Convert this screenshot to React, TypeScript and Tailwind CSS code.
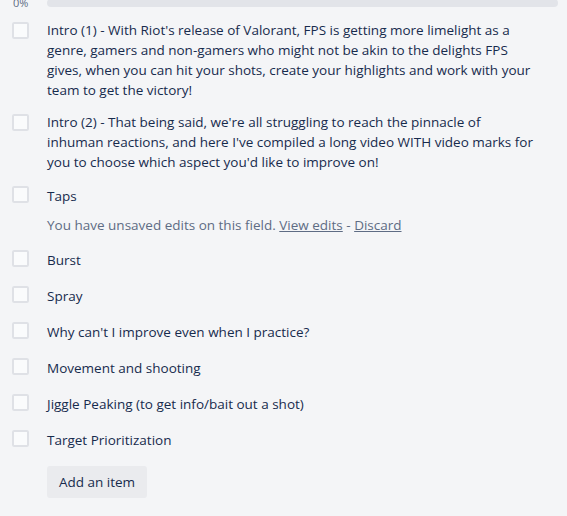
import React from 'react';

const items = [
    { id: 1, text: "Intro (1) - With Riot's release of Valorant, FPS is getting more limelight as a genre, gamers and non-gamers who might not be akin to the delights FPS gives, when you can hit your shots, create your highlights and work with your team to get the victory!" },
    { id: 2, text: "Intro (2) - That being said, we're all struggling to reach the pinnacle of inhuman reactions, and here I've compiled a long video WITH video marks for you to choose which aspect you'd like to improve on!" },
    { id: 3, text: 'Taps', unsaved: true },
    { id: 4, text: 'Burst' },
    { id: 5, text: 'Spray' },
    { id: 6, text: "Why can't I improve even when I practice?" },
    { id: 7, text: 'Movement and shooting' },
    { id: 8, text: 'Jiggle Peaking (to get info/bait out a shot)' },
    { id: 9, text: 'Target Prioritization' },
];

const Checkbox = () => (
    <div className="w-[17px] h-[17px] rounded-[2px] bg-[#fafbfc] shadow-[inset_0_0_0_2px_#dfe1e6]" />
);

export default function App() {
    return (
        <div
            className="min-h-[516px] w-[567px] overflow-hidden bg-[#f4f5f7] text-[#172b4d] text-[13.5px] leading-5"
            style={{ fontFamily: '"Open Sans", "Noto Sans", sans-serif' }}
        >
            {/* progress */}
            <div className="flex items-start h-[14px] pr-[9px]">
                <div className="w-[47px] shrink-0 pl-[13px] -mt-[3px] text-[11px] leading-[12px] text-[#5e6c84]">0%</div>
                <div className="flex-1 -mt-[1px] h-[8px] rounded-[4px] bg-[#e2e4e9]" />
            </div>

            {/* items */}
            <div className="pr-[30px]">
                {items.map((item) => (
                    <div key={item.id} className="flex">
                        <div className="w-[47px] shrink-0 pl-[12px] pt-[8px]">
                            <Checkbox />
                        </div>
                        <div className="flex-1">
                            <div className="min-h-[36px] py-[6px] flex items-center">
                                <span>{item.text}</span>
                            </div>
                            {item.unsaved && (
                                <div className="pt-[1px] pb-[7px] text-[#5e6c84]">
                                    You have unsaved edits on this field.{' '}
                                    <a href="#" className="underline">View edits</a>
                                    {' - '}
                                    <a href="#" className="underline">Discard</a>
                                </div>
                            )}
                        </div>
                    </div>
                ))}
            </div>

            <div className="pl-[47px] mt-[8px]">
                <button className="h-[32px] w-[100px] rounded-[3px] bg-[#eaebee] text-[#172b4d]">
                    Add an item
                </button>
            </div>
        </div>
    );
}
